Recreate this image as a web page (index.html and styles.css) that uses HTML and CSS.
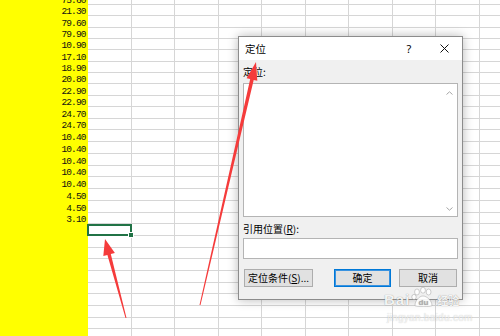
FILE: index.html
```html
<!DOCTYPE html>
<html lang="zh-CN">
<head>
<meta charset="utf-8">
<title>定位</title>
<link rel="stylesheet" href="styles.css">
</head>
<body>
<div class="sheet">
  <div class="row r0"><div class="a">75.60</div><div class="c"></div><div class="c"></div><div class="c"></div><div class="c"></div><div class="c"></div><div class="c"></div><div class="c"></div><div class="c"></div><div class="c"></div><div class="c"></div></div>
  <div class="row h1"><div class="a">21.30</div><div class="c"></div><div class="c"></div><div class="c"></div><div class="c"></div><div class="c"></div><div class="c"></div><div class="c"></div><div class="c"></div><div class="c"></div><div class="c"></div></div>
  <div class="row h1"><div class="a">79.60</div><div class="c"></div><div class="c"></div><div class="c"></div><div class="c"></div><div class="c"></div><div class="c"></div><div class="c"></div><div class="c"></div><div class="c"></div><div class="c"></div></div>
  <div class="row h1"><div class="a">79.90</div><div class="c"></div><div class="c"></div><div class="c"></div><div class="c"></div><div class="c"></div><div class="c"></div><div class="c"></div><div class="c"></div><div class="c"></div><div class="c"></div></div>
  <div class="row h1"><div class="a">10.90</div><div class="c"></div><div class="c"></div><div class="c"></div><div class="c"></div><div class="c"></div><div class="c"></div><div class="c"></div><div class="c"></div><div class="c"></div><div class="c"></div></div>
  <div class="row h1"><div class="a">17.10</div><div class="c"></div><div class="c"></div><div class="c"></div><div class="c"></div><div class="c"></div><div class="c"></div><div class="c"></div><div class="c"></div><div class="c"></div><div class="c"></div></div>
  <div class="row h1"><div class="a">18.90</div><div class="c"></div><div class="c"></div><div class="c"></div><div class="c"></div><div class="c"></div><div class="c"></div><div class="c"></div><div class="c"></div><div class="c"></div><div class="c"></div></div>
  <div class="row h1"><div class="a">20.80</div><div class="c"></div><div class="c"></div><div class="c"></div><div class="c"></div><div class="c"></div><div class="c"></div><div class="c"></div><div class="c"></div><div class="c"></div><div class="c"></div></div>
  <div class="row h1"><div class="a">22.90</div><div class="c"></div><div class="c"></div><div class="c"></div><div class="c"></div><div class="c"></div><div class="c"></div><div class="c"></div><div class="c"></div><div class="c"></div><div class="c"></div></div>
  <div class="row h1"><div class="a">22.90</div><div class="c"></div><div class="c"></div><div class="c"></div><div class="c"></div><div class="c"></div><div class="c"></div><div class="c"></div><div class="c"></div><div class="c"></div><div class="c"></div></div>
  <div class="row h2"><div class="a">24.70</div><div class="c"></div><div class="c"></div><div class="c"></div><div class="c"></div><div class="c"></div><div class="c"></div><div class="c"></div><div class="c"></div><div class="c"></div><div class="c"></div></div>
  <div class="row h2"><div class="a">24.70</div><div class="c"></div><div class="c"></div><div class="c"></div><div class="c"></div><div class="c"></div><div class="c"></div><div class="c"></div><div class="c"></div><div class="c"></div><div class="c"></div></div>
  <div class="row h2"><div class="a">10.40</div><div class="c"></div><div class="c"></div><div class="c"></div><div class="c"></div><div class="c"></div><div class="c"></div><div class="c"></div><div class="c"></div><div class="c"></div><div class="c"></div></div>
  <div class="row h2"><div class="a">10.40</div><div class="c"></div><div class="c"></div><div class="c"></div><div class="c"></div><div class="c"></div><div class="c"></div><div class="c"></div><div class="c"></div><div class="c"></div><div class="c"></div></div>
  <div class="row h2"><div class="a">10.40</div><div class="c"></div><div class="c"></div><div class="c"></div><div class="c"></div><div class="c"></div><div class="c"></div><div class="c"></div><div class="c"></div><div class="c"></div><div class="c"></div></div>
  <div class="row h2"><div class="a">10.40</div><div class="c"></div><div class="c"></div><div class="c"></div><div class="c"></div><div class="c"></div><div class="c"></div><div class="c"></div><div class="c"></div><div class="c"></div><div class="c"></div></div>
  <div class="row h2"><div class="a">10.40</div><div class="c"></div><div class="c"></div><div class="c"></div><div class="c"></div><div class="c"></div><div class="c"></div><div class="c"></div><div class="c"></div><div class="c"></div><div class="c"></div></div>
  <div class="row h2"><div class="a">4.50</div><div class="c"></div><div class="c"></div><div class="c"></div><div class="c"></div><div class="c"></div><div class="c"></div><div class="c"></div><div class="c"></div><div class="c"></div><div class="c"></div></div>
  <div class="row h2"><div class="a">4.50</div><div class="c"></div><div class="c"></div><div class="c"></div><div class="c"></div><div class="c"></div><div class="c"></div><div class="c"></div><div class="c"></div><div class="c"></div><div class="c"></div></div>
  <div class="row h2"><div class="a">3.10</div><div class="c"></div><div class="c"></div><div class="c"></div><div class="c"></div><div class="c"></div><div class="c"></div><div class="c"></div><div class="c"></div><div class="c"></div><div class="c"></div></div>
  <div class="row"><div class="a"></div><div class="c sel"></div><div class="c"></div><div class="c"></div><div class="c"></div><div class="c"></div><div class="c"></div><div class="c"></div><div class="c"></div><div class="c"></div><div class="c"></div></div>
  <div class="row"><div class="a"></div><div class="c"></div><div class="c"></div><div class="c"></div><div class="c"></div><div class="c"></div><div class="c"></div><div class="c"></div><div class="c"></div><div class="c"></div><div class="c"></div></div>
  <div class="row"><div class="a"></div><div class="c"></div><div class="c"></div><div class="c"></div><div class="c"></div><div class="c"></div><div class="c"></div><div class="c"></div><div class="c"></div><div class="c"></div><div class="c"></div></div>
  <div class="row"><div class="a"></div><div class="c"></div><div class="c"></div><div class="c"></div><div class="c"></div><div class="c"></div><div class="c"></div><div class="c"></div><div class="c"></div><div class="c"></div><div class="c"></div></div>
  <div class="row"><div class="a"></div><div class="c"></div><div class="c"></div><div class="c"></div><div class="c"></div><div class="c"></div><div class="c"></div><div class="c"></div><div class="c"></div><div class="c"></div><div class="c"></div></div>
  <div class="row"><div class="a"></div><div class="c"></div><div class="c"></div><div class="c"></div><div class="c"></div><div class="c"></div><div class="c"></div><div class="c"></div><div class="c"></div><div class="c"></div><div class="c"></div></div>
  <div class="row"><div class="a"></div><div class="c"></div><div class="c"></div><div class="c"></div><div class="c"></div><div class="c"></div><div class="c"></div><div class="c"></div><div class="c"></div><div class="c"></div><div class="c"></div></div>
  <div class="row"><div class="a"></div><div class="c"></div><div class="c"></div><div class="c"></div><div class="c"></div><div class="c"></div><div class="c"></div><div class="c"></div><div class="c"></div><div class="c"></div><div class="c"></div></div>
  <div class="row"><div class="a"></div><div class="c"></div><div class="c"></div><div class="c"></div><div class="c"></div><div class="c"></div><div class="c"></div><div class="c"></div><div class="c"></div><div class="c"></div><div class="c"></div></div>
  <div class="row"><div class="a"></div><div class="c"></div><div class="c"></div><div class="c"></div><div class="c"></div><div class="c"></div><div class="c"></div><div class="c"></div><div class="c"></div><div class="c"></div><div class="c"></div></div>
</div>

<div class="dialog">
  <div class="titlebar">
    <span class="title">定位</span>
    <span class="help">?</span>
    <span class="close"><svg width="9" height="9" viewBox="0 0 9 9"><path d="M0.5 0.5L8.5 8.5M8.5 0.5L0.5 8.5" stroke="#111" stroke-width="1" fill="none"/></svg></span>
  </div>
  <div class="body">
    <div class="label">定位:</div>
    <div class="listbox">
      <div class="scroll">
        <svg width="7" height="4" viewBox="0 0 7 4"><path d="M0.5 3.5L3.5 0.8L6.5 3.5" stroke="#a6a6a6" fill="none"/></svg>
        <svg width="7" height="4" viewBox="0 0 7 4"><path d="M0.5 0.5L3.5 3.2L6.5 0.5" stroke="#a6a6a6" fill="none"/></svg>
      </div>
    </div>
    <div class="label label2">引用位置(<u>R</u>):</div>
    <div class="input"></div>
    <div class="buttons">
      <div class="btn b1">定位条件(<u>S</u>)...</div>
      <div class="btn b2">确定</div>
      <div class="btn b3">取消</div>
    </div>
  </div>
</div>

<svg class="arrows" width="500" height="336" viewBox="0 0 500 336">
  <polygon points="105,239 114.9,253 110.8,254 126.5,317.9 125.5,318.1 107.4,255 103.3,256" fill="#f53b3b"/>
  <polygon points="256,62 257.3,80.8 253.7,79.9 200.5,305.1 199.5,304.9 250.2,79.1 246.6,78.3" fill="#f53b3b"/>
</svg>

<div class="wm">
  <div class="wm-logo">
    <span class="wm-bai">Bai</span>
    <svg class="wm-paw" width="24" height="20" viewBox="0 0 24 20">
      <g fill="rgba(255,255,255,0.9)" stroke="rgba(110,110,110,0.45)" stroke-width="0.7">
        <ellipse cx="6" cy="5" rx="2.4" ry="3"/>
        <ellipse cx="12" cy="3.2" rx="2.4" ry="3"/>
        <ellipse cx="17.6" cy="5" rx="2.4" ry="3"/>
        <ellipse cx="3" cy="10" rx="2.2" ry="2.6"/>
        <path d="M4 18.5C4 14 8 9 12 9C16 9 21 14 21 18.5C21 20 4 20 4 18.5Z"/>
      </g>
      <text x="12.5" y="18.4" text-anchor="middle" font-family="Liberation Sans" font-weight="bold" font-size="8" fill="rgba(170,170,170,0.8)">du</text>
    </svg>
    <span class="wm-jy">经验</span>
  </div>
  <div class="wm-url">jingyan.baidu.com</div>
</div>
</body>
</html>
```

FILE: styles.css
```css
html, body {
  margin: 0;
  padding: 0;
}
body {
  width: 500px;
  height: 336px;
  overflow: hidden;
  position: relative;
  background: #fff;
  font-family: "Noto Sans CJK SC", "Noto Sans", sans-serif;
  color: #000;
}

.sheet {
  margin-top: -6px;
}
.row {
  display: flex;
  height: 11.67px;
}
.r0 { height: 11px; }
.h1 { height: 11.33px; }
.h2 { height: 11.75px; }

.a {
  flex: 0 0 88px;
  box-sizing: border-box;
  background: #ffff00;
  display: flex;
  align-items: flex-end;
  justify-content: flex-end;
  padding-right: 2.5px;
  font-family: "Liberation Mono", monospace;
  font-size: 9.5px;
  line-height: 8px;
  letter-spacing: -0.9px;
  color: #111;
}
.c {
  flex: 0 0 43.5px;
  box-sizing: border-box;
  border-right: 1px solid #d6d6d6;
  border-bottom: 1px solid #d6d6d6;
}
.sel {
  position: relative;
}
.sel::after {
  content: "";
  position: absolute;
  left: -1.5px;
  top: -0.5px;
  right: -1px;
  bottom: -1px;
  border: 2px solid #217346;
}
.sel::before {
  content: "";
  position: absolute;
  right: -3px;
  bottom: -3px;
  width: 4px;
  height: 4px;
  background: #217346;
  border: 1px solid #fff;
  z-index: 1;
}

.dialog {
  position: absolute;
  left: 238px;
  top: 36px;
  width: 225px;
  height: 264px;
  box-sizing: border-box;
  border: 1px solid #8c8c8c;
  background: #f0f0f0;
  box-shadow: 0 0 10px rgba(0, 0, 0, 0.28);
}
.titlebar {
  height: 23px;
  background: #fff;
  display: flex;
  align-items: center;
}
.title {
  flex: 1;
  margin-left: 6px;
  font-size: 10.5px;
  line-height: 12px;
}
.help {
  width: 20px;
  margin-right: 10px;
  text-align: center;
  font-family: "Noto Sans", sans-serif;
  font-size: 11px;
  line-height: 12px;
}
.close {
  width: 30px;
  height: 23px;
  margin-right: 3px;
  display: flex;
  align-items: center;
  justify-content: center;
}
.close svg { display: block; }

.body {
  padding: 6px 4px 0 4px;
  display: flex;
  flex-direction: column;
}
.label {
  height: 12px;
  font-size: 10px;
  line-height: 12px;
}
.label2 {
  margin-top: 6px;
}
.listbox {
  margin-top: 5px;
  height: 134px;
  box-sizing: border-box;
  border: 1px solid #b4b4b4;
  background: #fff;
  display: flex;
  justify-content: flex-end;
}
.scroll {
  width: 16px;
  display: flex;
  flex-direction: column;
  justify-content: space-between;
  align-items: center;
  padding: 7px 0 5px;
}
.scroll svg { display: block; }
.input {
  margin-top: 3px;
  height: 21px;
  box-sizing: border-box;
  border: 1px solid #b4b4b4;
  background: #fff;
}
.buttons {
  margin-top: 10px;
  padding: 0 1px;
  display: flex;
}
.btn {
  height: 18px;
  box-sizing: border-box;
  border: 1px solid #adadad;
  background: #e1e1e1;
  font-size: 10px;
  line-height: 12px;
  display: flex;
  align-items: center;
  justify-content: center;
}
.b1 { width: 69px; }
.b2 {
  width: 57px;
  margin-left: auto;
  border-color: #0078d7;
  box-shadow: inset 0 0 0 1px #3a93e0;
}
.b3 {
  width: 58px;
  margin-left: 8px;
}

.arrows {
  position: absolute;
  left: 0;
  top: 0;
  pointer-events: none;
}

.wm {
  position: absolute;
  left: 384px;
  top: 286px;
  color: rgba(255, 255, 255, 0.92);
  text-shadow: 0 0 1px rgba(0, 0, 0, 0.45);
}
.wm-logo {
  display: flex;
  align-items: flex-end;
  height: 21px;
}
.wm-bai {
  font-family: "Liberation Sans", sans-serif;
  font-weight: bold;
  font-size: 15px;
  line-height: 15px;
  letter-spacing: 1px;
}
.wm-paw {
  display: block;
  margin-left: 1px;
}
.wm-jy {
  margin-left: 2px;
  font-size: 11px;
  line-height: 14px;
  font-weight: bold;
}
.wm-url {
  margin-top: 5px;
  margin-left: 3px;
  font-family: "Liberation Sans", sans-serif;
  font-size: 10px;
  line-height: 11px;
  letter-spacing: 0.3px;
  color: rgba(255, 255, 255, 0.75);
  text-shadow: 0 0 1px rgba(0, 0, 0, 0.25);
}
```
